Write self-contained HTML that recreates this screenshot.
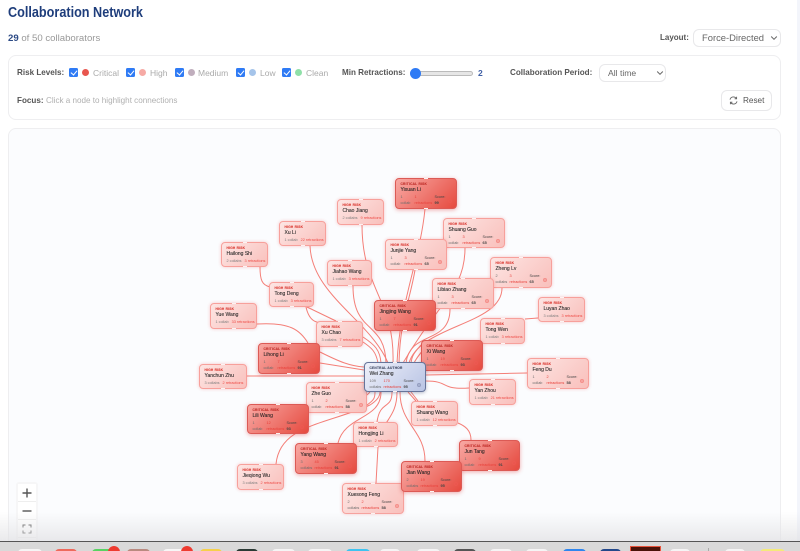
<!DOCTYPE html>
<html><head><meta charset="utf-8"><style>
*{box-sizing:border-box}
html,body{margin:0;padding:0;width:800px;height:551px;overflow:hidden;background:#fff;font-family:"Liberation Sans",sans-serif}
#p{position:absolute;left:0;top:0;width:800px;height:551px;overflow:hidden;filter:blur(.35px)}
.a{position:absolute;white-space:nowrap}
.sel{position:absolute;border:1px solid #e8e8ea;border-radius:6px;background:#fff;color:#666}
.cb{position:absolute;top:68px;width:9px;height:9px;background:#2f7bf5;border-radius:1.5px}
.cb:after{content:"";position:absolute;left:2.8px;top:1px;width:3px;height:5px;border:solid #fff;border-width:0 1.3px 1.3px 0;transform:rotate(40deg)}
.dot{position:absolute;top:69px;width:7px;height:7px;border-radius:50%}
.lb{position:absolute;top:67px;font-size:8.5px;line-height:12px;color:#aaa}
.n{position:absolute;border-radius:4px;border:1px solid #f7a09b;background:linear-gradient(135deg,#fde5e3,#f9c0bc);box-shadow:0 0 3px rgba(239,68,68,.3)}
.n.c{border-color:#dc5a55;background:linear-gradient(135deg,#f8a8a3,#e64a3f);box-shadow:0 1px 4px rgba(220,38,38,.38)}
.n.m{border:1px solid #66749a;background:linear-gradient(135deg,#eef0fa,#b9c4e4);box-shadow:0 1px 3px rgba(60,70,110,.35)}
.n:before,.n:after{content:"";position:absolute;left:50%;margin-left:-2px;width:4px;height:1.5px;background:#fdf2f1}
.n:before{top:-1.2px}.n:after{bottom:-1.2px}
.n span{position:absolute;white-space:nowrap;left:4.5px;line-height:5px}
.t{top:3.3px;font-size:3.2px;font-weight:bold;letter-spacing:.25px;color:#d9362f;-webkit-text-stroke:.1px #d9362f}
.c .t{color:#bd2a26;-webkit-text-stroke-color:#bd2a26}.m .t{color:#3b4560;-webkit-text-stroke-color:#3b4560}
.nm{top:9.4px;font-size:5px;color:#222;-webkit-text-stroke:.08px #222}
.s{top:15.9px;font-size:3.8px;color:#7d7d7d}.s b{font-weight:normal;color:#ee4a45;margin-left:2px}
.r1,.r2{font-size:3.8px;color:#6d6d6d}
.r1{top:16.3px}.r2{top:21.6px}
.n span.k{left:18.5px;color:#e8403a}.n span.z{left:38.5px;color:#444}
.n span.z.v{font-weight:bold}
.n i{position:absolute;left:52px;top:20px;width:4px;height:4px;border-radius:50%;background:rgba(239,90,85,.25);border:.4px solid rgba(239,90,85,.35)}
.zb{position:absolute;left:18px;width:18px;height:18px;background:#fff;border-bottom:1px solid #eee;color:#555;text-align:center}
.d{position:absolute;border-radius:4px 4px 0 0}
</style></head><body><div id="p">
<div class="a" style="left:8px;top:3.5px;font-size:14.3px;line-height:18px;font-weight:bold;color:#1e3d7b;transform:scaleX(.885);transform-origin:0 0">Collaboration Network</div>
<div class="a" style="left:8px;top:32px;font-size:9.6px;line-height:13px;color:#999"><b style="color:#2c4a85">29</b> of 50 collaborators</div>
<div class="a" style="left:660px;top:32px;font-size:8px;line-height:12px;font-weight:bold;color:#555">Layout:</div>
<div class="sel" style="left:693px;top:29px;width:88px;height:18px;font-size:9.4px;line-height:16px;padding-left:8px">Force-Directed</div>
<svg class="a" style="left:770px;top:35px" width="8" height="6"><path d="M1.2 1.5L4 4.3 6.8 1.5" fill="none" stroke="#666" stroke-width="1"/></svg>

<div class="a" style="left:8px;top:55px;width:773px;height:65px;border:1px solid #eeeef0;border-radius:8px;background:#fff"></div>
<div class="a" style="left:17px;top:67px;font-size:8.1px;line-height:12px;font-weight:bold;color:#555">Risk Levels:</div>
<div class="cb" style="left:69px"></div><div class="dot" style="left:82px;background:#e8564e"></div><div class="lb" style="left:93px">Critical</div>
<div class="cb" style="left:126px"></div><div class="dot" style="left:139px;background:#f6aaa5"></div><div class="lb" style="left:150px">High</div>
<div class="cb" style="left:175px"></div><div class="dot" style="left:188px;background:#c0aebd"></div><div class="lb" style="left:198px">Medium</div>
<div class="cb" style="left:236px"></div><div class="dot" style="left:249px;background:#a5c4ea"></div><div class="lb" style="left:260px">Low</div>
<div class="cb" style="left:282px"></div><div class="dot" style="left:295px;background:#8fe0a8"></div><div class="lb" style="left:306px">Clean</div>
<div class="a" style="left:342px;top:67px;font-size:8.1px;line-height:12px;font-weight:bold;color:#555">Min Retractions:</div>
<div class="a" style="left:410px;top:70.5px;width:63px;height:5px;background:#e6e6e6;border:.8px solid #bbb;border-radius:3px"></div>
<div class="a" style="left:410px;top:67.5px;width:11px;height:11px;border-radius:50%;background:#2f7bf5"></div>
<div class="a" style="left:478px;top:67px;font-size:8.5px;line-height:12px;font-weight:bold;color:#3f5fa5">2</div>
<div class="a" style="left:510px;top:67px;font-size:8.1px;line-height:12px;font-weight:bold;color:#555">Collaboration Period:</div>
<div class="sel" style="left:599px;top:64px;width:67px;height:18px;font-size:8.6px;line-height:17px;padding-left:8px">All time</div>
<svg class="a" style="left:656px;top:70px" width="8" height="6"><path d="M1.2 1.5L4 4.3 6.8 1.5" fill="none" stroke="#666" stroke-width="1"/></svg>
<div class="a" style="left:17px;top:95px;font-size:8.1px;line-height:12px;font-weight:bold;color:#555">Focus:</div>
<div class="a" style="left:46px;top:95px;font-size:8.1px;line-height:12px;color:#b0b0b0">Click a node to highlight connections</div>
<div class="sel" style="left:721px;top:90px;width:51px;height:21px;font-size:8.2px;line-height:20px;padding-left:21px;color:#555">Reset</div>
<svg class="a" style="left:729px;top:96px" width="9" height="9" viewBox="0 0 9 9"><path d="M1 3.6A3.5 3.5 0 0 1 7.4 2.6M8 5.4A3.5 3.5 0 0 1 1.6 6.4M7.6 .8V2.8H5.6M1.4 8.2V6.2H3.4" fill="none" stroke="#666" stroke-width=".9"/></svg>

<div class="a" style="left:8px;top:128px;width:773px;height:430px;border:1px solid #eeeef0;border-radius:8px;background:#fbfcfe"></div>
<div class="a" style="left:797px;top:0;width:3px;height:551px;background:#f3f5fb"></div>

<svg class="a" style="left:0;top:0" width="800" height="551" fill="none" stroke="#f47f78" stroke-width="1">
<path d="M362 225C362 290 395 300 393 363"/>
<path d="M310 246C312 295 370 320 388 363"/>
<path d="M353 286C353 335 385 320 386 363"/>
<path d="M425 209C420 260 400 300 397 363"/>
<path d="M415 270C410 300 400 320 399 363"/>
<path d="M465 248C465 290 440 300 403 363"/>
<path d="M450 309C450 345 410 330 406 363"/>
<path d="M502 288C502 325 420 325 409 363"/>
<path d="M538 318L525 319"/>
<path d="M260 267C260 280 262 285 270 287"/>
<path d="M306 307C310 325 320 323 330 323"/>
<path d="M307 307L336 321"/>
<path d="M257 324C290 322 300 330 308 343"/>
<path d="M363 337C375 345 380 350 381 363"/>
<path d="M363 342C372 348 376 352 378 363"/>
<path d="M320 352C340 362 350 366 364 367"/>
<path d="M320 363L364 370"/>
<path d="M247 376L364 376"/>
<path d="M276 464C280 425 325 425 370 405C378 400 380 395 380 392"/>
<path d="M338 443C345 415 381 420 381 392"/>
<path d="M377 422C380 400 392 410 392 392"/>
<path d="M376 483L378 447C380 420 397 420 397 392"/>
<path d="M425 461C425 430 400 425 400 392"/>
<path d="M418 401L411 392M416 401L408 392"/>
<path d="M471 440C471 430 465 426 458 423"/>
<path d="M469 388C440 390 450 381 426 381"/>
<path d="M527 373L426 375"/>
<path d="M367 395L370 392M367 405C374 400 375 398 375 392"/>
<path d="M421 345C415 352 412 355 411 363"/>
<path d="M432 340C425 348 418 355 414 363"/>
</svg>

<div class="n" style="left:337px;top:199px;width:47px;height:26px"><span class="t">HIGH RISK</span><span class="nm">Chao Jiang</span><span class="s">2 collabs <b>9 retractions</b></span></div>
<div class="n" style="left:279px;top:221px;width:47px;height:25px"><span class="t">HIGH RISK</span><span class="nm">Xu Li</span><span class="s">1 collab <b>22 retractions</b></span></div>
<div class="n" style="left:221px;top:242px;width:47px;height:25px"><span class="t">HIGH RISK</span><span class="nm">Hailong Shi</span><span class="s">2 collabs <b>3 retractions</b></span></div>
<div class="n" style="left:327px;top:260px;width:45px;height:26px"><span class="t">HIGH RISK</span><span class="nm">Jiahao Wang</span><span class="s">1 collab <b>3 retractions</b></span></div>
<div class="n" style="left:269px;top:282px;width:45px;height:25px"><span class="t">HIGH RISK</span><span class="nm">Tong Deng</span><span class="s">1 collab <b>3 retractions</b></span></div>
<div class="n" style="left:210px;top:303px;width:47px;height:26px"><span class="t">HIGH RISK</span><span class="nm">Yue Wang</span><span class="s">1 collab <b>33 retractions</b></span></div>
<div class="n" style="left:316px;top:321px;width:47px;height:26px"><span class="t">HIGH RISK</span><span class="nm">Xu Chao</span><span class="s">3 collabs <b>7 retractions</b></span></div>
<div class="n" style="left:538px;top:297px;width:47px;height:25px"><span class="t">HIGH RISK</span><span class="nm">Luyan Zhao</span><span class="s">3 collabs <b>3 retractions</b></span></div>
<div class="n" style="left:480px;top:318px;width:45px;height:26px"><span class="t">HIGH RISK</span><span class="nm">Tong Wen</span><span class="s">1 collab <b>3 retractions</b></span></div>
<div class="n" style="left:469px;top:379px;width:47px;height:26px"><span class="t">HIGH RISK</span><span class="nm">Yan Zhou</span><span class="s">1 collab <b>21 retractions</b></span></div>
<div class="n" style="left:411px;top:401px;width:47px;height:25px"><span class="t">HIGH RISK</span><span class="nm">Shuang Wang</span><span class="s">1 collab <b>12 retractions</b></span></div>
<div class="n" style="left:199px;top:364px;width:48px;height:25px"><span class="t">HIGH RISK</span><span class="nm">Yanchun Zhu</span><span class="s">3 collabs <b>2 retractions</b></span></div>
<div class="n" style="left:353px;top:422px;width:45px;height:25px"><span class="t">HIGH RISK</span><span class="nm">Hongjing Li</span><span class="s">1 collab <b>2 retractions</b></span></div>
<div class="n" style="left:237px;top:464px;width:47px;height:26px"><span class="t">HIGH RISK</span><span class="nm">Jieqiong Wu</span><span class="s">3 collabs <b>2 retractions</b></span></div>

<div class="n" style="left:443px;top:218px;width:62px;height:30px"><span class="t">HIGH RISK</span><span class="nm">Shuang Guo</span><span class="r1">1</span><span class="r1 k">3</span><span class="r1 z k" style="left:38.5px">Score:</span><span class="r2">collab</span><span class="r2 k">retractions</span><span class="r2 z v k" style="left:38.5px">65</span><i></i></div>
<div class="n" style="left:385px;top:239px;width:62px;height:31px"><span class="t">HIGH RISK</span><span class="nm">Junjie Yang</span><span class="r1">1</span><span class="r1 k">3</span><span class="r1 z k" style="left:38.5px">Score:</span><span class="r2">collab</span><span class="r2 k">retractions</span><span class="r2 z v k" style="left:38.5px">65</span><i></i></div>
<div class="n" style="left:490px;top:257px;width:62px;height:31px"><span class="t">HIGH RISK</span><span class="nm">Zheng Lv</span><span class="r1">2</span><span class="r1 k">3</span><span class="r1 z k" style="left:38.5px">Score:</span><span class="r2">collabs</span><span class="r2 k">retractions</span><span class="r2 z v k" style="left:38.5px">65</span><i></i></div>
<div class="n" style="left:432px;top:278px;width:62px;height:31px"><span class="t">HIGH RISK</span><span class="nm">Libiao Zhang</span><span class="r1">1</span><span class="r1 k">3</span><span class="r1 z k" style="left:38.5px">Score:</span><span class="r2">collab</span><span class="r2 k">retractions</span><span class="r2 z v k" style="left:38.5px">65</span><i></i></div>
<div class="n" style="left:527px;top:358px;width:62px;height:31px"><span class="t">HIGH RISK</span><span class="nm">Feng Du</span><span class="r1">1</span><span class="r1 k">2</span><span class="r1 z k" style="left:38.5px">Score:</span><span class="r2">collab</span><span class="r2 k">retractions</span><span class="r2 z v k" style="left:38.5px">58</span><i></i></div>
<div class="n" style="left:306px;top:382px;width:61px;height:31px"><span class="t">HIGH RISK</span><span class="nm">Zhe Guo</span><span class="r1">1</span><span class="r1 k">2</span><span class="r1 z k" style="left:38.5px">Score:</span><span class="r2">collab</span><span class="r2 k">retractions</span><span class="r2 z v k" style="left:38.5px">58</span><i></i></div>
<div class="n" style="left:342px;top:483px;width:62px;height:31px"><span class="t">HIGH RISK</span><span class="nm">Xuesong Feng</span><span class="r1">2</span><span class="r1 k">2</span><span class="r1 z k" style="left:38.5px">Score:</span><span class="r2">collabs</span><span class="r2 k">retractions</span><span class="r2 z v k" style="left:38.5px">58</span><i></i></div>

<div class="n c" style="left:395px;top:178px;width:62px;height:31px"><span class="t">CRITICAL RISK</span><span class="nm">Yixuan Li</span><span class="r1">1</span><span class="r1 k">1</span><span class="r1 z">Score:</span><span class="r2">collab</span><span class="r2 k">retractions</span><span class="r2 z v">99</span><i></i></div>
<div class="n c" style="left:374px;top:300px;width:62px;height:31px"><span class="t">CRITICAL RISK</span><span class="nm">Jingjing Wang</span><span class="r1">1</span><span class="r1 k">7</span><span class="r1 z">Score:</span><span class="r2">collab</span><span class="r2 k">retractions</span><span class="r2 z v">91</span><i></i></div>
<div class="n c" style="left:258px;top:343px;width:62px;height:31px"><span class="t">CRITICAL RISK</span><span class="nm">Lihong Li</span><span class="r1">1</span><span class="r1 k">7</span><span class="r1 z">Score:</span><span class="r2">collab</span><span class="r2 k">retractions</span><span class="r2 z v">91</span><i></i></div>
<div class="n c" style="left:421px;top:340px;width:62px;height:31px"><span class="t">CRITICAL RISK</span><span class="nm">Xi Wang</span><span class="r1">1</span><span class="r1 k">19</span><span class="r1 z">Score:</span><span class="r2">collab</span><span class="r2 k">retractions</span><span class="r2 z v">93</span><i></i></div>
<div class="n c" style="left:459px;top:440px;width:61px;height:31px"><span class="t">CRITICAL RISK</span><span class="nm">Jun Tang</span><span class="r1">1</span><span class="r1 k">9</span><span class="r1 z">Score:</span><span class="r2">collab</span><span class="r2 k">retractions</span><span class="r2 z v">91</span><i></i></div>
<div class="n c" style="left:401px;top:461px;width:61px;height:31px"><span class="t">CRITICAL RISK</span><span class="nm">Jian Wang</span><span class="r1">2</span><span class="r1 k">19</span><span class="r1 z">Score:</span><span class="r2">collabs</span><span class="r2 k">retractions</span><span class="r2 z v">95</span><i></i></div>
<div class="n c" style="left:247px;top:404px;width:62px;height:30px"><span class="t">CRITICAL RISK</span><span class="nm">Lili Wang</span><span class="r1">1</span><span class="r1 k">12</span><span class="r1 z">Score:</span><span class="r2">collab</span><span class="r2 k">retractions</span><span class="r2 z v">93</span><i></i></div>
<div class="n c" style="left:295px;top:443px;width:62px;height:31px"><span class="t">CRITICAL RISK</span><span class="nm">Yang Wang</span><span class="r1">3</span><span class="r1 k">45</span><span class="r1 z">Score:</span><span class="r2">collabs</span><span class="r2 k">retractions</span><span class="r2 z v">91</span><i></i></div>

<div class="n m" style="left:364px;top:362px;width:62px;height:30px"><span class="t">CENTRAL AUTHOR</span><span class="nm">Wei Zhang</span><span class="r1">109</span><span class="r1 k">170</span><span class="r1 z">Score:</span><span class="r2">collabs</span><span class="r2 k">retractions</span><span class="r2 z v">95</span><i style="background:rgba(90,100,140,.2);border-color:rgba(90,100,140,.3)"></i></div>

<div class="a" style="left:16px;top:482px;width:22px;height:70px;background:#f6f6f7;border-radius:3px"></div>
<div class="zb" style="top:484px"><svg width="18" height="18"><path d="M9 4.5V13.5M4.5 9H13.5" stroke="#555" stroke-width="1.4"/></svg></div>
<div class="zb" style="top:502px"><svg width="18" height="18"><path d="M4.5 9H13.5" stroke="#555" stroke-width="1.4"/></svg></div>
<div class="zb" style="top:520px"><svg width="18" height="18"><path d="M5 7.5V5H7.5M10.5 5H13V7.5M13 10.5V13H10.5M7.5 13H5V10.5" fill="none" stroke="#555" stroke-width="1"/></svg></div>
<div class="zb" style="top:538px"></div>

<div class="a" style="left:0;top:512px;width:800px;height:30px;background:linear-gradient(rgba(225,225,228,0),rgba(225,225,228,.75))"></div>
<div class="a" style="left:0;top:541px;width:800px;height:10px;background:#d9d9d9;border-top:1.2px solid #555"></div>
<div class="d" style="left:18px;top:549px;width:24px;height:4px;background:#f5f5f5"></div>
<div class="d" style="left:55px;top:549px;width:22px;height:4px;background:#ee6a5c"></div>
<div class="d" style="left:92px;top:549px;width:25px;height:4px;background:#58d262"></div>
<div class="d" style="left:127px;top:549px;width:23px;height:4px;background:#b98a80"></div>
<div class="d" style="left:163px;top:549px;width:27px;height:4px;background:#f7f7f7"></div>
<div class="d" style="left:200px;top:549px;width:22px;height:4px;background:#f6d04a"></div>
<div class="d" style="left:236px;top:549px;width:22px;height:4px;background:#2b3a35"></div>
<div class="d" style="left:272px;top:549px;width:23px;height:4px;background:#f5f5f5"></div>
<div class="d" style="left:308px;top:549px;width:24px;height:4px;background:#f5f5f5"></div>
<div class="d" style="left:346px;top:549px;width:24px;height:4px;background:#3fc3f0"></div>
<div class="d" style="left:380px;top:549px;width:20px;height:4px;background:#f5f5f5"></div>
<div class="d" style="left:417px;top:549px;width:23px;height:4px;background:#f5f5f5"></div>
<div class="d" style="left:454px;top:549px;width:22px;height:4px;background:#555"></div>
<div class="d" style="left:490px;top:549px;width:22px;height:4px;background:#f5f5f5"></div>
<div class="d" style="left:526px;top:549px;width:22px;height:4px;background:#f5f5f5"></div>
<div class="d" style="left:563px;top:549px;width:23px;height:4px;background:#2f86ee"></div>
<div class="d" style="left:600px;top:549px;width:21px;height:4px;background:#23488a"></div>
<div class="a" style="left:630px;top:546px;width:31px;height:6px;background:#4a1208;border:1px solid #e8543c;border-bottom:0"></div>
<div class="d" style="left:670px;top:549px;width:20px;height:4px;background:#f5f5f5"></div>
<div class="a" style="left:708px;top:548px;width:1px;height:4px;background:#aaa"></div>
<div class="d" style="left:725px;top:549px;width:20px;height:4px;background:#f5f5f5"></div>
<div class="d" style="left:760px;top:549px;width:25px;height:4px;background:#f4ea7a"></div>
<div class="a" style="left:108px;top:546px;width:12px;height:12px;border-radius:50%;background:#ee3b30"></div>
<div class="a" style="left:181px;top:546px;width:12px;height:12px;border-radius:50%;background:#ee3b30"></div>
</div></body></html>
